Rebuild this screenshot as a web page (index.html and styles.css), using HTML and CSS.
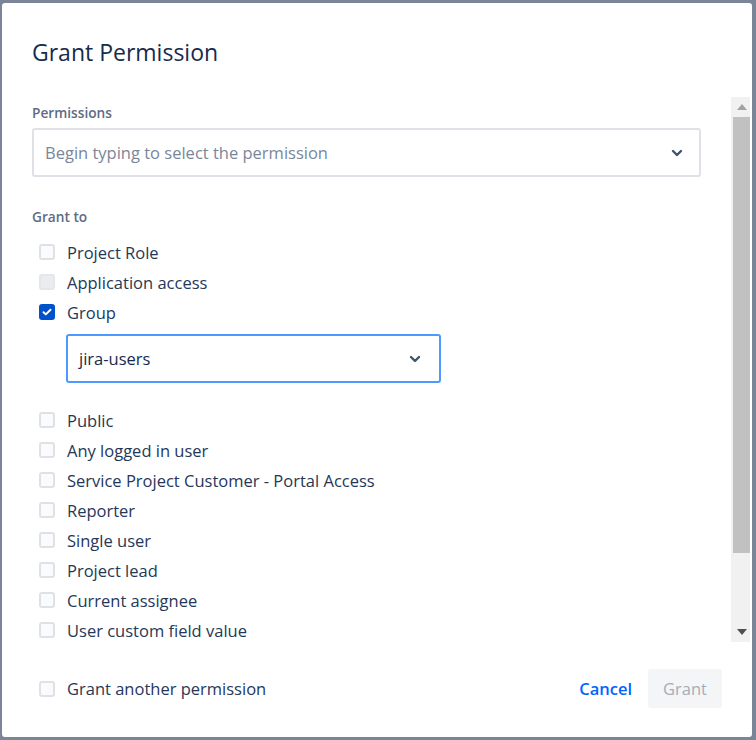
FILE: index.html
```html
<!DOCTYPE html>
<html lang="en">
<head>
    <meta charset="UTF-8">
    <title>Grant Permission</title>
    <link rel="stylesheet" href="styles.css">
</head>
<body>

    <div class="modal">
        <h1 class="modal-title">Grant Permission</h1>

        <div class="modal-body">
            <div class="body-content">
                <div class="field-label">Permissions</div>
                <div class="select">
                    <span class="placeholder">Begin typing to select the permission</span>
                    <svg class="chevron" width="12" height="8" viewBox="0 0 12 8"><path d="M2 2l4 4 4-4" fill="none" stroke="#42526e" stroke-width="2.4" stroke-linecap="round" stroke-linejoin="round"/></svg>
                </div>

                <div class="field-label grant-label">Grant to</div>
                <div class="options">
                    <label class="option"><span class="box"></span>Project Role</label>
                    <label class="option"><span class="box box-muted"></span>Application access</label>
                    <label class="option"><span class="box checked"><svg width="10" height="8" viewBox="0 0 10 8"><path d="M1.5 4.2l2.3 2.2L8.5 1.8" fill="none" stroke="#fff" stroke-width="2" stroke-linecap="round" stroke-linejoin="round"/></svg></span>Group</label>
                    <div class="select select-focus">
                        <span class="value">jira-users</span>
                        <svg class="chevron" width="12" height="8" viewBox="0 0 12 8"><path d="M2 2l4 4 4-4" fill="none" stroke="#42526e" stroke-width="2.4" stroke-linecap="round" stroke-linejoin="round"/></svg>
                    </div>
                    <label class="option"><span class="box"></span>Public</label>
                    <label class="option"><span class="box"></span>Any logged in user</label>
                    <label class="option"><span class="box"></span>Service Project Customer - Portal Access</label>
                    <label class="option"><span class="box"></span>Reporter</label>
                    <label class="option"><span class="box"></span>Single user</label>
                    <label class="option"><span class="box"></span>Project lead</label>
                    <label class="option"><span class="box"></span>Current assignee</label>
                    <label class="option"><span class="box"></span>User custom field value</label>
                </div>
            </div>

            <div class="scrollbar">
                <div class="scroll-btn"><svg width="10" height="6" viewBox="0 0 10 6"><path d="M0 6L5 0 10 6z" fill="#a3a3a3"/></svg></div>
                <div class="scroll-track"><div class="scroll-thumb"></div></div>
                <div class="scroll-btn"><svg width="10" height="6" viewBox="0 0 10 6"><path d="M0 0L5 6 10 0z" fill="#505050"/></svg></div>
            </div>
        </div>

        <div class="modal-footer">
            <label class="option"><span class="box"></span>Grant another permission</label>
            <div class="actions">
                <button class="btn-link">Cancel</button>
                <button class="btn" disabled>Grant</button>
            </div>
        </div>
    </div>

</body>
</html>
```

FILE: styles.css
```css
html, body {
    height: 100%;
}
body {
    font-family: 'Open Sans', 'Noto Sans', sans-serif;
    margin: 0;
    background-color: #7a8598;
    color: #172b4d;
    overflow: hidden;
}
.modal {
    margin: 3px 4px 0 2px;
    width: 750px;
    height: 734px;
    background: white;
    border-radius: 3px;
    display: flex;
    flex-direction: column;
}
.modal-title {
    margin: 0;
    padding: 34px 30px 0;
    height: 60px;
    font-size: 23px;
    font-weight: 400;
    line-height: 30px;
    color: #172b4d;
}
.modal-body {
    height: 545px;
    display: flex;
    padding-right: 2px;
}
.body-content {
    flex: 1;
    overflow: hidden;
    padding: 8px 0 0 30px;
}
.scrollbar {
    width: 19px;
    background: #f1f1f1;
    display: flex;
    flex-direction: column;
}
.scroll-btn {
    height: 20px;
    display: flex;
    align-items: center;
    justify-content: center;
    padding-left: 2px;
}
.scroll-track {
    flex: 1;
    padding-left: 2px;
}
.scroll-thumb {
    height: 436px;
    background: #c1c1c1;
}
.field-label {
    font-size: 13.7px;
    font-weight: 600;
    line-height: 16px;
    color: #5e6c84;
}
.grant-label {
    margin-top: 32px;
}
.select {
    margin-top: 7px;
    width: 669px;
    height: 49px;
    box-sizing: border-box;
    border: 2px solid #dfe1e6;
    border-radius: 3px;
    display: flex;
    align-items: center;
    justify-content: space-between;
    padding: 0 16px 0 11px;
    font-size: 16.5px;
}
.placeholder {
    color: #7a869a;
}
.select-focus {
    margin: 7px 0 22px 34px;
    width: 375px;
    border-color: #4c9aff;
    padding-right: 18px;
}
.value {
    color: #172b4d;
}
.options {
    margin-top: 12px;
}
.option {
    display: flex;
    align-items: center;
    height: 30px;
    font-size: 16.5px;
    color: #253858;
}
.box {
    width: 16px;
    height: 16px;
    box-sizing: border-box;
    margin: 0 12px 0 7px;
    border: 2px solid #dfe1e6;
    border-radius: 3px;
    background: #fafbfc;
    display: flex;
    align-items: center;
    justify-content: center;
}
.box-muted {
    background: #ebecf0;
    border-color: #e4e6eb;
}
.checked {
    background: #0052cc;
    border-color: #0052cc;
}
.modal-footer {
    flex: 1;
    display: flex;
    align-items: center;
    justify-content: space-between;
    padding: 0 30px 2px 30px;
}
.actions {
    display: flex;
    align-items: center;
    gap: 4px;
}
button {
    font-family: inherit;
    font-size: 16.5px;
    border: none;
    border-radius: 3px;
    cursor: pointer;
}
.btn-link {
    background: none;
    color: #0065ff;
    font-weight: 600;
    padding: 0 12px;
    height: 39px;
}
.btn {
    background: #f4f5f7;
    color: #a5adba;
    width: 74px;
    height: 39px;
    padding: 0;
}
```
